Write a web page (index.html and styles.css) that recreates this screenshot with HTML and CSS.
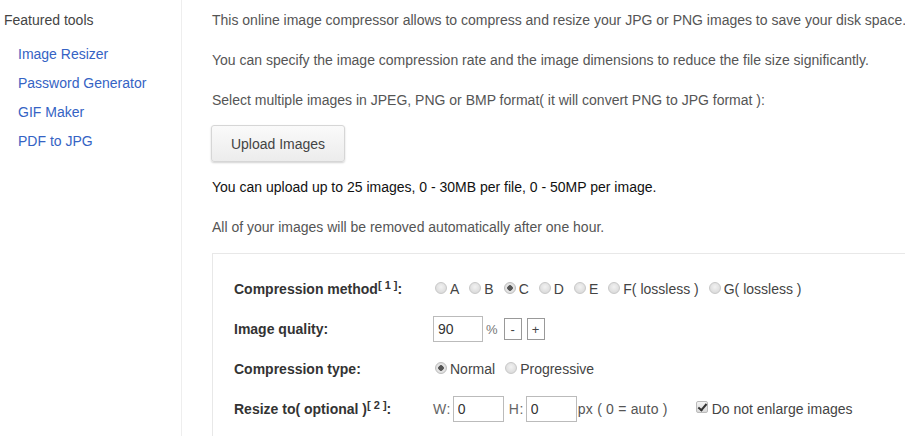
FILE: index.html
```html
<!DOCTYPE html>
<html>
<head>
<meta charset="utf-8">
<link rel="stylesheet" href="styles.css">
</head>
<body>
<div class="page">
  <aside class="sidebar">
    <div class="side-title">Featured tools</div>
    <ul class="side-links">
      <li><a href="#">Image Resizer</a></li>
      <li><a href="#">Password Generator</a></li>
      <li><a href="#">GIF Maker</a></li>
      <li><a href="#">PDF to JPG</a></li>
    </ul>
  </aside>
  <main class="main">
    <p class="txt">This online image compressor allows to compress and resize your JPG or PNG images to save your disk space.</p>
    <p class="txt">You can specify the image compression rate and the image dimensions to reduce the file size significantly.</p>
    <p class="txt">Select multiple images in JPEG, PNG or BMP format( it will convert PNG to JPG format ):</p>
    <button class="upload">Upload Images</button>
    <p class="txt dark">You can upload up to 25 images, 0 - 30MB per file, 0 - 50MP per image.</p>
    <p class="txt">All of your images will be removed automatically after one hour.</p>
    <div class="panel">
      <div class="row">
        <div class="label">Compression method<sup>[ 1 ]</sup>:</div>
        <div class="val">
          <label class="opt"><input type="radio" name="m"><span>A</span></label>
          <label class="opt"><input type="radio" name="m"><span>B</span></label>
          <label class="opt"><input type="radio" name="m" checked><span>C</span></label>
          <label class="opt"><input type="radio" name="m"><span>D</span></label>
          <label class="opt"><input type="radio" name="m"><span>E</span></label>
          <label class="opt"><input type="radio" name="m"><span>F( lossless )</span></label>
          <label class="opt"><input type="radio" name="m"><span>G( lossless )</span></label>
        </div>
      </div>
      <div class="row">
        <div class="label">Image quality:</div>
        <div class="val">
          <input class="box q" type="text" value="90">
          <span class="pct">%</span>
          <button class="step">-</button>
          <button class="step">+</button>
        </div>
      </div>
      <div class="row">
        <div class="label">Compression type:</div>
        <div class="val">
          <label class="opt"><input type="radio" name="t" checked><span>Normal</span></label>
          <label class="opt"><input type="radio" name="t"><span>Progressive</span></label>
        </div>
      </div>
      <div class="row">
        <div class="label">Resize to( optional )<sup>[ 2 ]</sup>:</div>
        <div class="val">
          <span class="dim">W:</span><input class="box d" type="text" value="0">
          <span class="dim h">H:</span><input class="box d" type="text" value="0">
          <span class="auto">px ( 0 = auto )</span>
          <label class="opt chk"><input type="checkbox" checked><span>Do not enlarge images</span></label>
        </div>
      </div>
    </div>
  </main>
</div>
</body>
</html>
```
FILE: styles.css
```css
html, body {
  margin: 0;
  padding: 0;
  background: #fff;
  font-family: "Liberation Sans", Arial, sans-serif;
  font-size: 14px;
  color: #555;
  overflow: hidden;
}
.page {
  display: flex;
  width: 905px;
  height: 436px;
  overflow: hidden;
}
.sidebar {
  width: 182px;
  flex: none;
  border-right: 1px solid #eee;
  padding-top: 10px;
  box-sizing: border-box;
}
.side-title {
  padding-left: 4px;
  line-height: 20px;
  color: #444;
}
.side-links {
  list-style: none;
  margin: 10px 0 0;
  padding: 0 0 0 18px;
}
.side-links li {
  line-height: 29px;
}
.side-links a {
  color: #3563c4;
  text-decoration: none;
}
.main {
  flex: 1;
  min-width: 0;
  padding: 10px 0 0 30px;
  white-space: nowrap;
}
.txt {
  margin: 0 0 20px;
  line-height: 20px;
  color: #555;
}
.txt.dark {
  color: #111;
}
.upload {
  display: block;
  margin: -5px 0 15px -1px;
  width: 134px;
  height: 37px;
  font-family: inherit;
  font-size: 14px;
  color: #444;
  background: linear-gradient(#fafafa, #ececec);
  border: 1px solid #d6d6d6;
  border-radius: 3px;
  box-shadow: 0 1px 2px rgba(0,0,0,0.18);
}
.panel {
  margin-top: -4px;
  border-top: 1px solid #e8e8e8;
  border-left: 1px solid #e8e8e8;
  padding: 15px 0 0 21px;
  height: 200px;
}
.row {
  display: flex;
  align-items: center;
  height: 40px;
}
.label {
  width: 199px;
  flex: none;
  font-weight: bold;
  color: #333;
}
.label sup {
  font-size: 11px;
  vertical-align: 5px;
  line-height: 0;
}
.val {
  display: flex;
  align-items: center;
  color: #444;
}
.opt {
  display: inline-flex;
  align-items: center;
  margin-right: 8px;
}
.opt input[type=radio] {
  appearance: none;
  -webkit-appearance: none;
  width: 12px;
  height: 12px;
  margin: 0 3px 0 2px;
  border-radius: 50%;
  border: 1px solid #c8c8c8;
  background: radial-gradient(circle at 50% 40%, #f2f2f2, #d4d4d4);
  box-sizing: border-box;
  position: relative;
  top: -1px;
}
.opt input[type=radio]:checked {
  background: radial-gradient(circle, #555 0 2.5px, #e6e6e6 3px, #d8d8d8);
  border-color: #bdbdbd;
}
.box {
  font-family: inherit;
  font-size: 14px;
  color: #333;
  border: 1px solid #bbb;
  height: 26px;
  box-sizing: border-box;
  padding: 0 0 0 4px;
  margin: 0;
  outline: none;
}
.box.q {
  width: 50px;
}
.box.d {
  width: 51px;
  margin-left: 2px;
}
.pct {
  margin: 0 6px 0 3px;
  color: #777;
  font-size: 13px;
}
.step {
  width: 18px;
  height: 22px;
  padding: 0;
  margin: 0 5px 0 0;
  font-family: inherit;
  font-size: 13px;
  color: #444;
  background: #fff;
  border: 1px solid #999;
  border-radius: 0;
}
.dim {
  color: #666;
  letter-spacing: 0.5px;
}
.dim.h {
  margin-left: 5px;
}
.auto {
  margin-left: 1px;
  color: #555;
  letter-spacing: 0.2px;
}
.opt.chk {
  margin-left: 28px;
}
.opt input[type=checkbox] {
  appearance: none;
  -webkit-appearance: none;
  width: 12px;
  height: 12px;
  margin: 0 4px 0 0;
  border: 1px solid #bbb;
  border-radius: 2px;
  background: linear-gradient(#f4f4f4, #d9d9d9);
  position: relative;
  top: -2px;
}
.opt input[type=checkbox]:checked::after {
  content: "";
  position: absolute;
  left: 3px;
  top: 0px;
  width: 3px;
  height: 7px;
  border: solid #333;
  border-width: 0 2px 2px 0;
  transform: rotate(40deg);
}
```
